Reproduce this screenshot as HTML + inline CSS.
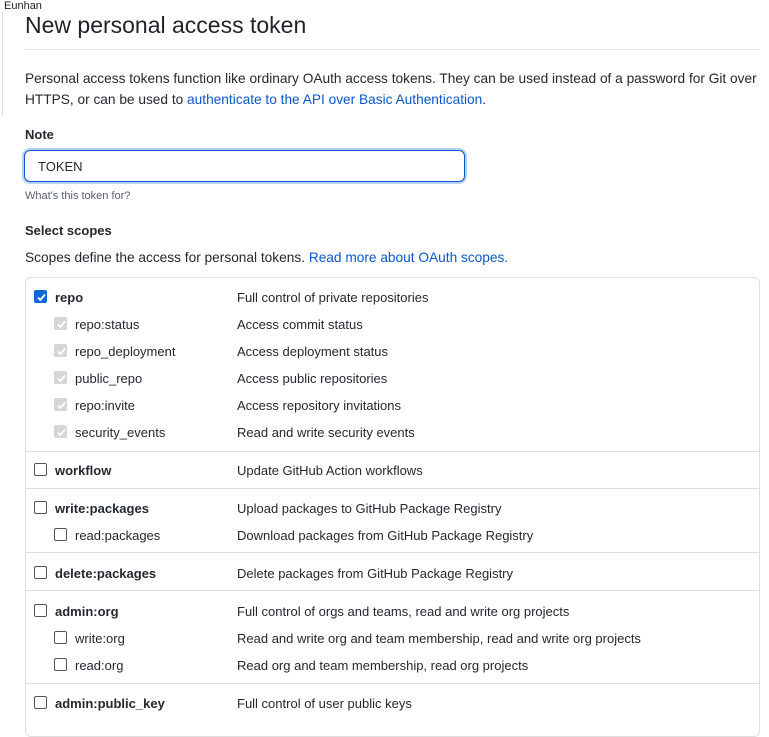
<!DOCTYPE html>
<html><head><meta charset="utf-8"><style>
*{margin:0;padding:0;box-sizing:border-box}
body{width:769px;height:716px;overflow:hidden;background:#fff;font-family:"Liberation Sans",sans-serif;color:#24292f;position:relative}
.a{position:absolute;white-space:nowrap}
.t{font-size:13px;line-height:16px}
.p{font-size:13.7px;line-height:16px}
.cb{position:absolute;width:13px;height:13px;border:1px solid #555;border-radius:2px;background:#fff}
.cb.on{background:#0b6ad8;border-color:#0b6ad8}
.cb.dis{background:#d6d6d6;border-color:#d6d6d6}
.cb svg{position:absolute;left:1px;top:1px}
.hr{position:absolute;left:25px;width:734px;height:1px;background:#dedede}
a{color:#0a58ca;text-decoration:none}
</style></head><body>
<div class="a" style="left:4px;top:0;font-size:11px;color:#222">Eunhan</div>
<div class="a" style="left:2px;top:12px;width:1px;height:104px;background:#ddd"></div>
<div class="a" style="left:25px;top:10px;font-size:23px;line-height:30px;color:#1f2328">New personal access token</div>
<div class="a" style="left:25px;top:49px;width:735px;height:1px;background:#e3e3e3"></div>
<div class="a p" style="left:25px;top:71px">Personal access tokens function like ordinary OAuth access tokens. They can be used instead of a password for Git over</div>
<div class="a p" style="left:25px;top:92px">HTTPS, or can be used to <a>authenticate to the API over Basic Authentication</a>.</div>
<div class="a p" style="left:25px;top:127px;font-weight:bold;font-size:13px">Note</div>
<div class="a" style="left:24px;top:150px;width:441px;height:32px;border:1px solid #0a58ca;border-radius:6px;box-shadow:0 0 0 2px #b7d1f5"></div>
<div class="a t" style="left:38px;top:159px">TOKEN</div>
<div class="a" style="left:25px;top:190px;font-size:11px;color:#57606a">What's this token for?</div>
<div class="a t" style="left:25px;top:223px;font-weight:bold">Select scopes</div>
<div class="a p" style="left:25px;top:250px">Scopes define the access for personal tokens. <a>Read more about OAuth scopes.</a></div>
<div class="a" style="left:25px;top:277px;width:735px;height:460px;border:1px solid #dedede;border-radius:6px"></div>
<div class="hr" style="top:451px"></div>
<div class="hr" style="top:488px"></div>
<div class="hr" style="top:552px"></div>
<div class="hr" style="top:590px"></div>
<div class="hr" style="top:683px"></div>

<div class="cb on" style="left:34px;top:290px"><svg width="11" height="11" viewBox="0 0 11 11"><path d="M2 5.5l2.3 2.5L9 2.5" stroke="#fff" stroke-width="1.8" fill="none"/></svg></div>
<div class="a t" style="left:55px;top:290px;font-weight:bold">repo</div><div class="a t" style="left:237px;top:290px">Full control of private repositories</div>

<div class="cb dis" style="left:54px;top:317px"><svg width="11" height="11" viewBox="0 0 11 11"><path d="M2 5.5l2.3 2.5L9 2.5" stroke="#fff" stroke-width="1.8" fill="none"/></svg></div>
<div class="a t" style="left:75px;top:317px">repo:status</div><div class="a t" style="left:237px;top:317px">Access commit status</div>
<div class="cb dis" style="left:54px;top:344px"><svg width="11" height="11" viewBox="0 0 11 11"><path d="M2 5.5l2.3 2.5L9 2.5" stroke="#fff" stroke-width="1.8" fill="none"/></svg></div>
<div class="a t" style="left:75px;top:344px">repo_deployment</div><div class="a t" style="left:237px;top:344px">Access deployment status</div>
<div class="cb dis" style="left:54px;top:371px"><svg width="11" height="11" viewBox="0 0 11 11"><path d="M2 5.5l2.3 2.5L9 2.5" stroke="#fff" stroke-width="1.8" fill="none"/></svg></div>
<div class="a t" style="left:75px;top:371px">public_repo</div><div class="a t" style="left:237px;top:371px">Access public repositories</div>
<div class="cb dis" style="left:54px;top:398px"><svg width="11" height="11" viewBox="0 0 11 11"><path d="M2 5.5l2.3 2.5L9 2.5" stroke="#fff" stroke-width="1.8" fill="none"/></svg></div>
<div class="a t" style="left:75px;top:398px">repo:invite</div><div class="a t" style="left:237px;top:398px">Access repository invitations</div>
<div class="cb dis" style="left:54px;top:425px"><svg width="11" height="11" viewBox="0 0 11 11"><path d="M2 5.5l2.3 2.5L9 2.5" stroke="#fff" stroke-width="1.8" fill="none"/></svg></div>
<div class="a t" style="left:75px;top:425px">security_events</div><div class="a t" style="left:237px;top:425px">Read and write security events</div>

<div class="cb" style="left:34px;top:463px"></div>
<div class="a t" style="left:55px;top:463px;font-weight:bold">workflow</div><div class="a t" style="left:237px;top:463px">Update GitHub Action workflows</div>

<div class="cb" style="left:34px;top:501px"></div>
<div class="a t" style="left:55px;top:501px;font-weight:bold">write:packages</div><div class="a t" style="left:237px;top:501px">Upload packages to GitHub Package Registry</div>
<div class="cb" style="left:54px;top:528px"></div>
<div class="a t" style="left:75px;top:528px">read:packages</div><div class="a t" style="left:237px;top:528px">Download packages from GitHub Package Registry</div>

<div class="cb" style="left:34px;top:566px"></div>
<div class="a t" style="left:55px;top:566px;font-weight:bold">delete:packages</div><div class="a t" style="left:237px;top:566px">Delete packages from GitHub Package Registry</div>

<div class="cb" style="left:34px;top:604px"></div>
<div class="a t" style="left:55px;top:604px;font-weight:bold">admin:org</div><div class="a t" style="left:237px;top:604px">Full control of orgs and teams, read and write org projects</div>
<div class="cb" style="left:54px;top:631px"></div>
<div class="a t" style="left:75px;top:631px">write:org</div><div class="a t" style="left:237px;top:631px">Read and write org and team membership, read and write org projects</div>
<div class="cb" style="left:54px;top:658px"></div>
<div class="a t" style="left:75px;top:658px">read:org</div><div class="a t" style="left:237px;top:658px">Read org and team membership, read org projects</div>

<div class="cb" style="left:34px;top:696px"></div>
<div class="a t" style="left:55px;top:696px;font-weight:bold">admin:public_key</div><div class="a t" style="left:237px;top:696px">Full control of user public keys</div>
</body></html>
